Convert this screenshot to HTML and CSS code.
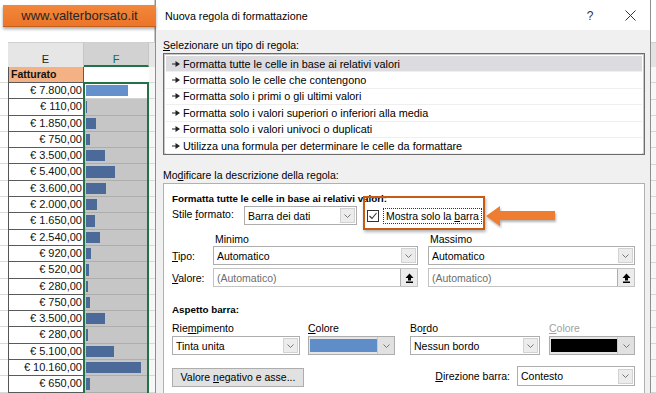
FILE: index.html
```html
<!DOCTYPE html>
<html lang="it">
<head>
<meta charset="utf-8">
<title>Nuova regola di formattazione</title>
<link rel="stylesheet" href="styles.css">
</head>
<body>
<div class="screen">
  <section class="sheet">
    <div class="sheet-top"><div class="brand">www.valterborsato.it</div></div>
    <div class="heads">
      <div class="rh"></div>
      <div class="ch ch-e">E</div>
      <div class="ch ch-f">F</div>
      <div class="ch ch-g"></div>
    </div>
    <div class="grid">
      <div class="col col-rh">
        <div class="c0"></div>
        <div class="c"></div><div class="c"></div><div class="c"></div><div class="c"></div><div class="c"></div>
        <div class="c"></div><div class="c"></div><div class="c"></div><div class="c"></div><div class="c"></div>
        <div class="c"></div><div class="c"></div><div class="c"></div><div class="c"></div><div class="c"></div>
        <div class="c"></div><div class="c"></div><div class="c"></div><div class="c"></div>
      </div>
      <div class="col col-e">
        <div class="ecell head">Fatturato</div>
        <div class="ecell">€ 7.800,00</div>
        <div class="ecell">€ 110,00</div>
        <div class="ecell">€ 1.850,00</div>
        <div class="ecell">€ 750,00</div>
        <div class="ecell">€ 3.500,00</div>
        <div class="ecell">€ 5.400,00</div>
        <div class="ecell">€ 3.600,00</div>
        <div class="ecell">€ 2.000,00</div>
        <div class="ecell">€ 1.650,00</div>
        <div class="ecell">€ 2.540,00</div>
        <div class="ecell">€ 920,00</div>
        <div class="ecell">€ 520,00</div>
        <div class="ecell">€ 280,00</div>
        <div class="ecell">€ 750,00</div>
        <div class="ecell">€ 3.500,00</div>
        <div class="ecell">€ 280,00</div>
        <div class="ecell">€ 5.100,00</div>
        <div class="ecell">€ 10.160,00</div>
        <div class="ecell">€ 650,00</div>
      </div>
      <div class="col col-f">
        <div class="fhead"></div>
        <div class="sel">
          <div class="fcell active"><div class="bar" style="width:42px"></div></div>
          <div class="fcell"><div class="bar" style="width:1px"></div></div>
          <div class="fcell"><div class="bar" style="width:10px"></div></div>
          <div class="fcell"><div class="bar" style="width:4px"></div></div>
          <div class="fcell"><div class="bar" style="width:19px"></div></div>
          <div class="fcell"><div class="bar" style="width:29px"></div></div>
          <div class="fcell"><div class="bar" style="width:20px"></div></div>
          <div class="fcell"><div class="bar" style="width:11px"></div></div>
          <div class="fcell"><div class="bar" style="width:9px"></div></div>
          <div class="fcell"><div class="bar" style="width:14px"></div></div>
          <div class="fcell"><div class="bar" style="width:5px"></div></div>
          <div class="fcell"><div class="bar" style="width:3px"></div></div>
          <div class="fcell"><div class="bar" style="width:2px"></div></div>
          <div class="fcell"><div class="bar" style="width:4px"></div></div>
          <div class="fcell"><div class="bar" style="width:19px"></div></div>
          <div class="fcell"><div class="bar" style="width:2px"></div></div>
          <div class="fcell"><div class="bar" style="width:28px"></div></div>
          <div class="fcell"><div class="bar" style="width:55px"></div></div>
          <div class="fcell"><div class="bar" style="width:4px"></div></div>
        </div>
      </div>
      <div class="col col-g">
        <div class="c0"></div>
        <div class="c"></div><div class="c"></div><div class="c"></div><div class="c"></div><div class="c"></div>
        <div class="c"></div><div class="c"></div><div class="c"></div><div class="c"></div><div class="c"></div>
        <div class="c"></div><div class="c"></div><div class="c"></div><div class="c"></div><div class="c"></div>
        <div class="c"></div><div class="c"></div><div class="c"></div><div class="c"></div>
      </div>
    </div>
  </section>

  <section class="dialog">
    <div class="titlebar">
      <span class="title">Nuova regola di formattazione</span>
      <span class="tb-btn help">?</span>
      <span class="tb-btn close"><svg width="11" height="11" viewBox="0 0 11 11"><path d="M0.5 0.5 L10.5 10.5 M10.5 0.5 L0.5 10.5" stroke="#333" stroke-width="1" fill="none"/></svg></span>
    </div>
    <div class="dbody">
      <div class="lbl"><u>S</u>elezionare un tipo di regola:</div>
      <div class="rule-list">
        <div class="rule selected"><svg class="ra" width="8" height="6" viewBox="0 0 8 6"><path d="M0 2.5 H3.5 V0 L8 3 L3.5 6 V3.5 H0 Z" fill="#222"/></svg><span>Formatta tutte le celle in base ai relativi valori</span></div>
        <div class="rule"><svg class="ra" width="8" height="6" viewBox="0 0 8 6"><path d="M0 2.5 H3.5 V0 L8 3 L3.5 6 V3.5 H0 Z" fill="#222"/></svg><span>Formatta solo le celle che contengono</span></div>
        <div class="rule"><svg class="ra" width="8" height="6" viewBox="0 0 8 6"><path d="M0 2.5 H3.5 V0 L8 3 L3.5 6 V3.5 H0 Z" fill="#222"/></svg><span>Formatta solo i primi o gli ultimi valori</span></div>
        <div class="rule"><svg class="ra" width="8" height="6" viewBox="0 0 8 6"><path d="M0 2.5 H3.5 V0 L8 3 L3.5 6 V3.5 H0 Z" fill="#222"/></svg><span>Formatta solo i valori superiori o inferiori alla media</span></div>
        <div class="rule"><svg class="ra" width="8" height="6" viewBox="0 0 8 6"><path d="M0 2.5 H3.5 V0 L8 3 L3.5 6 V3.5 H0 Z" fill="#222"/></svg><span>Formatta solo i valori univoci o duplicati</span></div>
        <div class="rule"><svg class="ra" width="8" height="6" viewBox="0 0 8 6"><path d="M0 2.5 H3.5 V0 L8 3 L3.5 6 V3.5 H0 Z" fill="#222"/></svg><span>Utilizza una formula per determinare le celle da formattare</span></div>
      </div>
      <div class="lbl lbl2">Mo<u>d</u>ificare la descrizione della regola:</div>
      <div class="desc">
        <div class="bold">Formatta tutte le celle in base ai relativi valori:</div>
        <div class="row stile-row">
          <span class="stile-lbl">Stile <u>f</u>ormato:</span>
          <div class="dd w-stile"><span class="dd-text">Barra dei dati</span><span class="dd-btn"><svg width="7" height="4" viewBox="0 0 7 4"><path d="M0.5 0.5 L3.5 3.5 L6.5 0.5" stroke="#777" fill="none"/></svg></span></div>
          <div class="checkgroup">
            <span class="chk"><svg width="10" height="10" viewBox="0 0 10 10"><path d="M1.5 5 L4 7.5 L8.5 2" stroke="#333" stroke-width="1.1" fill="none"/></svg></span>
            <span class="chk-lbl">Mostra solo la <u>b</u>arra</span>
            <span class="hl-rect"></span>
            <svg class="hl-arrow" width="70" height="21" viewBox="0 0 70 21"><path d="M0 10 L14 0 L14 5 L69 5 L69 14 L14 14 L14 20 Z" fill="#ee7d31"/></svg>
          </div>
        </div>
        <div class="row mm-row">
          <span class="mm-min">Minimo</span>
          <span>Massimo</span>
        </div>
        <div class="row field-row">
          <span class="f-lbl"><u>T</u>ipo:</span>
          <div class="dd w-min"><span class="dd-text">Automatico</span><span class="dd-btn"><svg width="7" height="4" viewBox="0 0 7 4"><path d="M0.5 0.5 L3.5 3.5 L6.5 0.5" stroke="#777" fill="none"/></svg></span></div>
          <div class="dd w-max"><span class="dd-text">Automatico</span><span class="dd-btn"><svg width="7" height="4" viewBox="0 0 7 4"><path d="M0.5 0.5 L3.5 3.5 L6.5 0.5" stroke="#777" fill="none"/></svg></span></div>
        </div>
        <div class="row field-row val-row">
          <span class="f-lbl"><u>V</u>alore:</span>
          <div class="inp w-min"><span class="inp-text">(Automatico)</span><span class="up-btn"><svg width="9" height="10" viewBox="0 0 9 10"><path d="M4.5 0.5 L8.5 5 H6 V7.5 H3 V5 H0.5 Z" fill="#000"/><rect x="1" y="8.5" width="7" height="1.5" fill="#000"/></svg></span></div>
          <div class="inp w-max"><span class="inp-text">(Automatico)</span><span class="up-btn"><svg width="9" height="10" viewBox="0 0 9 10"><path d="M4.5 0.5 L8.5 5 H6 V7.5 H3 V5 H0.5 Z" fill="#000"/><rect x="1" y="8.5" width="7" height="1.5" fill="#000"/></svg></span></div>
        </div>
        <div class="bold aspetto">Aspetto barra:</div>
        <div class="row app-row">
          <div class="grp w-fill">
            <span class="g-lbl">Rie<u>m</u>pimento</span>
            <div class="dd"><span class="dd-text">Tinta unita</span><span class="dd-btn"><svg width="7" height="4" viewBox="0 0 7 4"><path d="M0.5 0.5 L3.5 3.5 L6.5 0.5" stroke="#777" fill="none"/></svg></span></div>
          </div>
          <div class="grp w-col">
            <span class="g-lbl"><u>C</u>olore</span>
            <div class="dd color"><span class="swatch blue"></span><span class="dd-btn big"><svg width="7" height="4" viewBox="0 0 7 4"><path d="M0.5 0.5 L3.5 3.5 L6.5 0.5" stroke="#777" fill="none"/></svg></span></div>
          </div>
          <div class="grp w-bordo">
            <span class="g-lbl">Bo<u>r</u>do</span>
            <div class="dd"><span class="dd-text">Nessun bordo</span><span class="dd-btn"><svg width="7" height="4" viewBox="0 0 7 4"><path d="M0.5 0.5 L3.5 3.5 L6.5 0.5" stroke="#777" fill="none"/></svg></span></div>
          </div>
          <div class="grp w-col2">
            <span class="g-lbl disabled"><u>C</u>olore</span>
            <div class="dd color"><span class="swatch black"></span><span class="dd-btn big"><svg width="7" height="4" viewBox="0 0 7 4"><path d="M0.5 0.5 L3.5 3.5 L6.5 0.5" stroke="#777" fill="none"/></svg></span></div>
          </div>
        </div>
        <div class="row bottom-row">
          <span class="btn">Valore <u>n</u>egativo e asse...</span>
          <span class="dir-lbl"><u>D</u>irezione barra:</span>
          <div class="dd w-dir"><span class="dd-text">Contesto</span><span class="dd-btn"><svg width="7" height="4" viewBox="0 0 7 4"><path d="M0.5 0.5 L3.5 3.5 L6.5 0.5" stroke="#777" fill="none"/></svg></span></div>
        </div>
      </div>
    </div>
  </section>

  <div class="edge">
    <div class="edge-top"></div>
    <div class="edge-head"></div>
    <div class="edge-cells"></div>
  </div>
</div>
</body>
</html>
```
FILE: styles.css
```css
* { box-sizing: border-box; }
html, body { margin: 0; padding: 0; }
body {
  width: 656px;
  height: 393px;
  overflow: hidden;
  background: #fff;
  font-family: "Liberation Sans", Arial, sans-serif;
  color: #000;
}
u { text-decoration: underline; text-underline-offset: 1px; }
.screen { display: flex; width: 656px; height: 393px; overflow: hidden; }

/* ---------- spreadsheet ---------- */
.sheet { width: 155px; flex: none; position: relative; z-index: 2; }
.sheet-top { height: 42px; padding: 5px 0 0 3px; }
.brand {
  width: 153px;
  height: 22px;
  background: linear-gradient(#f2873b, #ec7529);
  border-bottom: 1px solid #c5601c;
  box-shadow: 0 2px 3px rgba(0, 0, 0, 0.35);
  color: #262626;
  font-size: 13px;
  line-height: 21px;
  text-align: center;
}
.heads { display: flex; height: 25px; }
.rh { width: 8px; background: #fff; }
.ch {
  background: #e6e6e6;
  border-top: 1px solid #d0d0d0;
  border-right: 1px solid #c6c6c6;
  font-size: 11px;
  line-height: 14px;
  padding-top: 9px;
  text-align: center;
  color: #222;
}
.ch-e { width: 76px; }
.ch-f { width: 65px; background: #d2d2d2; border-bottom: 2px solid #217346; color: #1d6a3e; }
.ch-g { width: 6px; border-right: none; }

.grid { display: flex; }
.col { display: flex; flex-direction: column; flex: none; }
.col-rh { width: 8px; }
.col-g { width: 6px; }
.c0 { height: 16px; border-bottom: 1px solid #d9d9d9; }
.c { height: 16.3px; border-bottom: 1px solid #d9d9d9; }
.col-g .c0, .col-g .c { background: #f7f7f7; }

.col-e { width: 76px; border-left: 1px solid #555; }
.ecell {
  height: 16.3px;
  border-bottom: 1px solid #5a5a5a;
  border-right: 1px solid #5a5a5a;
  background: #fff;
  font-size: 11px;
  line-height: 15px;
  text-align: right;
  padding-right: 1px;
  color: #111;
  white-space: nowrap;
}
.ecell.head {
  height: 16px;
  background: #f4b183;
  font-weight: bold;
  font-size: 10.5px;
  text-align: left;
  padding-left: 2px;
}

.col-f { width: 65px; }
.fhead { height: 16px; background: #fff; border-bottom: 1px solid #d4d4d4; }
.sel { position: relative; }
.sel::after {
  content: "";
  position: absolute;
  left: -1px;
  right: 0;
  top: -1px;
  bottom: -2px;
  border: 2px solid #217346;
}
.fcell {
  height: 16.3px;
  background: #c6c6c6;
  border-bottom: 1px solid #adadad;
  padding: 2px 0 2px 2px;
}
.fcell.active { background: #fff; border-bottom-color: #d4d4d4; }
.bar { height: 100%; background: #4b6a9a; }
.fcell.active .bar { background: #6490cb; }

/* ---------- right edge of sheet ---------- */
.edge { width: 5px; flex: none; display: flex; flex-direction: column; }
.edge-top { height: 42px; background: #fff; }
.edge-head { height: 25px; background: #e3e3e3; border-top: 1px solid #d0d0d0; }
.edge-cells {
  flex: 1;
  background: repeating-linear-gradient(#f7f7f7 0, #f7f7f7 15.3px, #d6d6d6 15.3px, #d6d6d6 16.3px);
}

/* ---------- dialog ---------- */
.dialog {
  width: 496px;
  flex: none;
  height: 393px;
  overflow: hidden;
  border-left: 1px solid #8e8e8e;
  border-right: 1px solid #8e8e8e;
  background: #f0f0f0;
  box-shadow: -1px 0 0 #c8c8c8;
  display: flex;
  flex-direction: column;
  position: relative;
  z-index: 1;
}
.titlebar {
  height: 30px;
  flex: none;
  background: #fff;
  display: flex;
  align-items: center;
  padding-left: 9px;
}
.title { font-size: 10.7px; color: #000; padding-top: 1px; }
.tb-btn { width: 40px; height: 30px; display: flex; align-items: center; justify-content: center; }
.help { margin-left: auto; font-size: 12px; color: #333; padding-top: 1px; }
.close svg { display: block; }

.dbody { padding: 8px 5px 0 7px; font-size: 10.5px; flex: 1; }
.lbl { line-height: 14px; height: 14px; white-space: nowrap; }
.lbl2 { margin-top: 13px; }
.rule-list {
  margin-top: 1px;
  height: 102px;
  overflow: hidden;
  background: #fff;
  border: 1px solid #6c6c6c;
  box-shadow: inset 0 0 0 1px #c8c8c8;
  padding: 2px 2px 0;
}
.rule {
  height: 16.4px;
  display: flex;
  align-items: center;
  gap: 3px;
  padding-left: 6px;
  border-bottom: 1px solid #efefef;
  white-space: nowrap;
  font-size: 10.85px;
}
.rule.selected { background: #dcdce0; }
.ra { flex: none; display: block; }

.desc {
  margin-top: 1px;
  height: 260px;
  background: #fff;
  border: 1px solid #b1b1b1;
  padding: 8px 9px 0 8px;
}
.bold { font-weight: bold; font-size: 9.8px; line-height: 13px; height: 13px; white-space: nowrap; }
.row { display: flex; align-items: center; white-space: nowrap; }
.stile-row { margin-top: 1px; height: 19px; }
.stile-lbl { width: 72px; flex: none; margin-top: -3px; }

.dd {
  height: 19px;
  display: flex;
  align-items: center;
  border: 1px solid #adadad;
  background: #fff;
  flex: none;
}
.dd-text { flex: 1; padding-left: 3px; white-space: nowrap; overflow: hidden; }
.dd-btn {
  width: 15px;
  height: 15px;
  margin-right: 1px;
  flex: none;
  border: 1px solid #d2d2d2;
  background: #ececec;
  display: flex;
  align-items: center;
  justify-content: center;
}
.dd-btn svg { display: block; }
.dd.color { background: #e5e5e5; padding-left: 1px; }
.swatch { flex: 1; height: 13px; }
.swatch.blue { background: #5f8dc8; }
.swatch.black { background: #000; }
.dd-btn.big { width: 17px; height: 17px; margin-right: 0; border: none; border-left: 1px solid #c9c9c9; background: #e1e1e1; }

.w-stile { width: 113px; }
.w-min { width: 205px; }
.w-max { width: 207px; margin-left: 10px; }
.w-dir { width: 118px; }

.checkgroup {
  position: relative;
  display: flex;
  align-items: center;
  gap: 4px;
  margin-left: 10px;
  height: 19px;
}
.chk {
  width: 12px;
  height: 12px;
  border: 1px solid #333;
  background: #fff;
  display: flex;
  align-items: center;
  justify-content: center;
}
.chk svg { display: block; }
.chk-lbl { border: 1px dotted #333; padding: 1px 2px 1px 2px; line-height: 12px; }
.hl-rect {
  position: absolute;
  left: -4px;
  top: -10px;
  width: 122px;
  height: 34px;
  border: 2px solid #c65b16;
  box-shadow: 1px 2px 3px rgba(0, 0, 0, 0.3);
}
.hl-arrow {
  position: absolute;
  left: 119px;
  top: 0;
  filter: drop-shadow(1px 2px 1px rgba(0, 0, 0, 0.3));
}

.mm-row { margin-top: 7px; height: 14px; line-height: 14px; padding-left: 43px; }
.mm-min { width: 215px; flex: none; }
.field-row { height: 19px; }
.val-row { margin-top: 3px; }
.f-lbl { width: 41px; flex: none; }

.inp {
  height: 19px;
  display: flex;
  align-items: center;
  border: 1px solid #c3c3c3;
  background: #fff;
  flex: none;
}
.inp-text { flex: 1; padding-left: 3px; color: #6d6d6d; }
.up-btn {
  width: 17px;
  height: 17px;
  flex: none;
  border-left: 1px solid #adadad;
  background: #ececec;
  display: flex;
  align-items: center;
  justify-content: center;
}
.up-btn svg { display: block; }

.aspetto { margin-top: 16px; }
.app-row { margin-top: 5px; align-items: flex-start; }
.grp { display: flex; flex-direction: column; gap: 1px; flex: none; }
.g-lbl { line-height: 14px; height: 14px; }
.g-lbl.disabled { color: #a2a2a2; }
.w-fill { width: 128px; }
.w-col { width: 87px; margin-left: 8px; }
.w-bordo { width: 130px; margin-left: 15px; }
.w-col2 { width: 86px; margin-left: 9px; }
.grp .dd { width: 100%; }

.bottom-row { margin-top: 11px; height: 20px; align-items: center; }
.btn {
  width: 132px;
  height: 19px;
  margin-top: 3px;
  border: 1px solid #adadad;
  background: #e1e1e1;
  text-align: center;
  line-height: 17px;
}
.dir-lbl { margin-left: auto; margin-right: 7px; }
.bottom-row .dd { height: 20px; }
```
